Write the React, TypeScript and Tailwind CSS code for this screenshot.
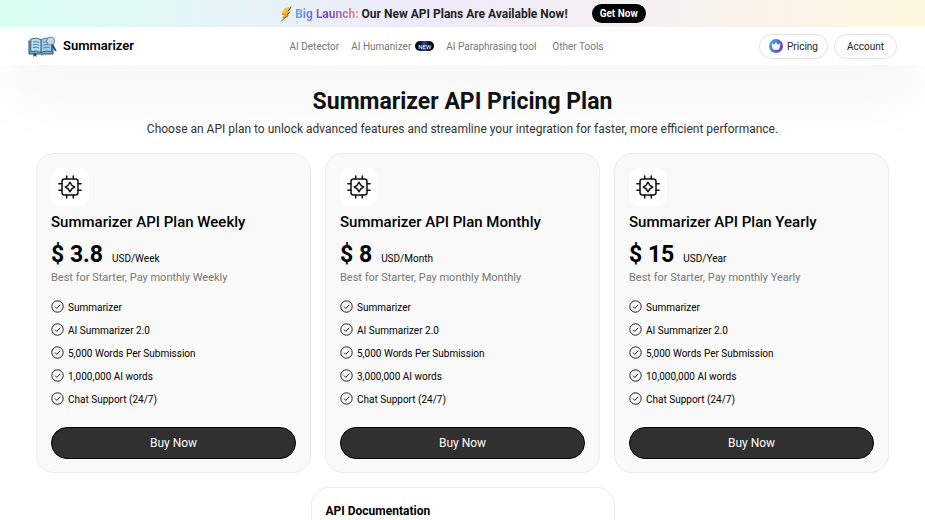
import { clsx } from "clsx"

interface Plan {
  name: string
  price: string
  period: string
  words: string
}

const plans: Plan[] = [
  { name: "Weekly", price: "3.8", period: "Week", words: "1,000,000" },
  { name: "Monthly", price: "8", period: "Month", words: "3,000,000" },
  { name: "Yearly", price: "15", period: "Year", words: "10,000,000" },
]

const navLinks = [
  { label: "AI Detector" },
  { label: "AI Humanizer", isNew: true },
  { label: "AI Paraphrasing tool" },
  { label: "Other Tools" },
]

export default function App() {
  return (
    <div className="flex h-screen flex-col overflow-hidden bg-white font-['Roboto','Liberation_Sans',sans-serif] text-black">
      <Banner />
      <Header />
      <main className="flex-1 px-9 pt-[21px]">
        <h1 className="text-center text-[23px] leading-8 font-bold text-[#111]">
          Summarizer API Pricing Plan
        </h1>
        <p className="text-center text-xs leading-[22px] text-[#333]">
          Choose an API plan to unlock advanced features and streamline your
          integration for faster, more efficient performance.
        </p>
        <div className="mt-[13px] grid grid-cols-3 gap-3.5">
          {plans.map((plan) => (
            <PlanCard key={plan.name} plan={plan} />
          ))}
        </div>
        <section className="mx-auto mt-3.5 w-full max-w-[304px] rounded-[18px] border border-[#ececec] bg-white px-3.5 pt-[15px] pb-10">
          <h2 className="text-xs leading-4 font-bold">API Documentation</h2>
        </section>
      </main>
    </div>
  )
}

function Banner() {
  return (
    <div className="relative flex h-[27px] shrink-0 items-center justify-center bg-linear-to-r from-[#d9fff2] via-[#eeeafb] via-45% to-[#fff8e1]">
      <div className="flex items-center">
        <BoltIcon />
        <p className="text-xs font-bold text-[#222]">
          <span className="bg-linear-to-r from-[#63a5f5] via-[#7040cc] to-[#f5866b] bg-clip-text text-transparent">
            Big Launch:
          </span>{" "}
          Our New API Plans Are Available Now!
        </p>
        <a
          href="#plans"
          className="ml-6 flex h-[19px] items-center rounded-full bg-black px-2 text-[10px] font-bold text-white"
        >
          Get Now
        </a>
      </div>
    </div>
  )
}

function Header() {
  return (
    <header className="flex h-[38px] shrink-0 items-center justify-between bg-white px-7 shadow-[0_20px_70px_-10px_rgba(0,0,0,0.15)]">
      <a href="#home" className="flex items-center gap-1.5">
        <BookIcon />
        <span className="text-[13px] font-semibold">Summarizer</span>
      </a>
      <nav className="flex items-center text-[10px] text-[#777]">
        {navLinks.map((link, i) => (
          <a
            key={link.label}
            href="#tools"
            className={clsx(
              "flex items-center",
              (i === 1 || i === 2) && "ml-3",
              i === 3 && "ml-4",
            )}
          >
            {link.label}
            {link.isNew && (
              <span className="ml-1 flex h-2.5 items-center rounded-full bg-linear-to-r from-black via-[#2b4a8c] to-black px-[3px] text-[6px] text-white">
                NEW
              </span>
            )}
          </a>
        ))}
      </nav>
      <div className="flex items-center gap-1.5 text-[10px] text-[#222]">
        <a
          href="#pricing"
          className="flex h-[25px] items-center gap-1 rounded-full border border-[#e2e2e2] px-[9px]"
        >
          <CrownIcon />
          Pricing
        </a>
        <button
          type="button"
          className="flex h-[25px] items-center rounded-full border border-[#e2e2e2] px-3"
        >
          Account
        </button>
      </div>
    </header>
  )
}

function PlanCard({ plan }: { plan: Plan }) {
  const features = [
    "Summarizer",
    "AI Summarizer 2.0",
    "5,000 Words Per Submission",
    `${plan.words} AI words`,
    "Chat Support (24/7)",
  ]

  return (
    <article className="rounded-[18px] border border-[#ececec] bg-[#f9f9f9] p-3.5 pb-[13px]">
      <div className="flex size-[38px] items-center justify-center rounded-[10px] bg-white">
        <ChipIcon />
      </div>
      <h2 className="mt-1 text-[15px] leading-6 font-medium">
        Summarizer API Plan {plan.name}
      </h2>
      <p className="mt-2 flex items-baseline gap-[9px]">
        <span className="text-[23px] leading-[26px] font-bold">$ {plan.price}</span>
        <span className="text-[10px] leading-4">USD/{plan.period}</span>
      </p>
      <p className="mt-0.5 text-[11px] leading-4 text-[#777]">
        Best for Starter, Pay monthly {plan.name}
      </p>
      <ul className="mt-2.5">
        {features.map((feature) => (
          <li
            key={feature}
            className="flex h-[23px] items-center gap-1 text-[10px]"
          >
            <CheckIcon />
            {feature}
          </li>
        ))}
      </ul>
      <button
        type="button"
        className="mt-4 h-8 w-full rounded-full border border-black bg-[#303030] text-xs text-white"
      >
        Buy Now
      </button>
    </article>
  )
}

function CheckIcon() {
  return (
    <svg viewBox="0 0 13 13" className="mb-0.5 size-[13px] shrink-0" fill="none" stroke="#222">
      <circle cx="6.5" cy="6.5" r="5.7" />
      <path d="m4 6.6 1.8 1.8L9.2 4.8" />
    </svg>
  )
}

function ChipIcon() {
  return (
    <svg
      viewBox="0 0 24 24"
      className="size-6"
      fill="none"
      stroke="#111"
      strokeWidth="1.5"
      strokeLinecap="round"
      strokeLinejoin="round"
    >
      <rect x="4" y="4" width="16" height="16" rx="2.5" />
      <path d="M8.7 4V.9M15.3 4V.9M8.7 23.1V20M15.3 23.1V20M4 8.7H.9M4 15.3H.9M23.1 8.7H20M23.1 15.3H20" />
      <path d="M12 7.3q1.3 3.4 4.7 4.7-3.4 1.3-4.7 4.7-1.3-3.4-4.7-4.7 3.4-1.3 4.7-4.7Z" />
    </svg>
  )
}

function BoltIcon() {
  return (
    <svg viewBox="0 0 14 16" className="mr-0.5 h-4 w-3.5">
      <defs>
        <linearGradient id="bolt" x1="0" y1="0" x2="0" y2="1">
          <stop offset="0" stopColor="#ffd43b" />
          <stop offset="1" stopColor="#f08a16" />
        </linearGradient>
      </defs>
      <path d="M12.8.5 6 3 3 9l3-.6-2.3 3.5 1.8-.4L1 16l9-6.4-1.6.1 3.1-3.9-2.2.2Z" fill="#7b4a35" />
      <path d="M11.8.5 5.2 2.6 2.5 8.4l3.3-.7-2.4 3.7 2-.4L.8 15.5l8.4-6.4-1.9.1 3.5-4-2.6.3Z" fill="url(#bolt)" />
    </svg>
  )
}

function CrownIcon() {
  return (
    <svg viewBox="0 0 14 14" className="size-3.5">
      <defs>
        <linearGradient id="crown" x1="0" y1="0" x2="1" y2="0.5">
          <stop offset="0" stopColor="#49b5e8" />
          <stop offset="1" stopColor="#6546b8" />
        </linearGradient>
      </defs>
      <circle cx="7" cy="7" r="7" fill="url(#crown)" />
      <path d="M3 4.7 5.3 6 7 3.5 8.7 6 11 4.7l-.7 4.2Q9.9 10.5 8.4 10.5H5.6Q4.1 10.5 3.7 8.9Z" fill="#fff" stroke="#fff" strokeWidth=".5" strokeLinejoin="round" />
    </svg>
  )
}

function BookIcon() {
  return (
    <svg viewBox="0 0 29 21" className="h-[21px] w-[29px]" strokeLinejoin="round">
      <path d="M1 4.5V18h11.5l1.2 1 1.2-1H25V5" fill="#78afd6" stroke="#34485a" />
      <path d="M2.8 3Q9 .8 13.2 3.8v12.7Q9 14 2.8 15.7Z" fill="#b2dcf5" stroke="#34485a" strokeWidth=".8" />
      <path d="M13.2 3.8Q17 1 23.6 3v12.7Q17.5 14 13.2 16.5Z" fill="#9dceee" stroke="#34485a" strokeWidth=".8" />
      <path d="M5 6q3.2-.7 6 .3M5 8.8q3.2-.7 6 .3M5 11.6q3.2-.7 6 .3M15.3 6.4q2.3-1 4.4-.6M15.3 9.2q2.4-1 5-.6M15.3 12q2.8-1 6-.5" fill="none" stroke="#46789c" strokeWidth=".9" />
      <path d="M5.4 17h3v4l-1.5-1.2L5.4 21Z" fill="#17507a" />
      <path d="m24.3 8.6 3.3 5.8" stroke="#34485a" strokeWidth="1.8" strokeLinecap="round" />
      <circle cx="22.7" cy="5" r="4" fill="#c3d9e6" fillOpacity=".9" stroke="#718796" />
      <path d="M20.8 4.7q.4-1.5 1.9-1.8" stroke="#fff" fill="none" strokeWidth=".8" />
    </svg>
  )
}
